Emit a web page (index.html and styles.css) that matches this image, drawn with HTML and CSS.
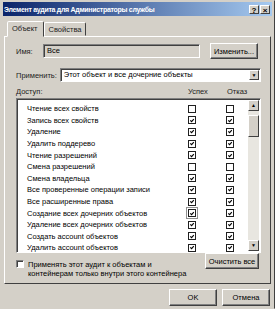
FILE: index.html
```html
<!DOCTYPE html>
<html lang="ru">
<head>
  <meta charset="UTF-8">
  <title>Элемент аудита для Администраторы службы</title>
  <link rel="stylesheet" href="styles.css">
</head>
<body>
  <div class="window">
    <div class="titlebar">
      <span class="title">Элемент аудита для Администраторы службы</span>
      <span class="tbtn">?</span>
      <span class="tbtn">×</span>
    </div>

    <div class="tabs">
      <span class="tab active">Объект</span>
      <span class="tab">Свойства</span>
    </div>

    <div class="panel">
      <div class="row name-row">
        <span class="label">Имя:</span>
        <span class="field readonly">Все</span>
        <span class="btn btn-change">Изменить...</span>
      </div>

      <div class="row apply-row">
        <span class="label">Применить:</span>
        <span class="field combo">Этот объект и все дочерние объекты<span class="drop">▼</span></span>
      </div>

      <div class="access-head">
        <span>Доступ:</span>
        <span class="col-head">Успех</span>
        <span class="col-head">Отказ</span>
      </div>

      <div class="listbox">
        <div class="rows" id="rows"></div>
        <div class="scrollbar">
          <span class="sbtn">▲</span>
          <span class="thumb"></span>
          <span class="track"></span>
          <span class="sbtn">▼</span>
        </div>
      </div>

      <div class="inherit">
        <span class="cb empty"></span>
        <span class="inherit-text">Применять этот аудит к объектам и<br>контейнерам только внутри этого контейнера</span>
        <span class="btn btn-clear">Очистить все</span>
      </div>
    </div>

    <div class="footer">
      <span class="btn btn-ok">OK</span>
      <span class="btn btn-cancel">Отмена</span>
    </div>
  </div>

  <script>
    const perms = [
      ['Чтение всех свойств', 0, 0],
      ['Запись всех свойств', 1, 1],
      ['Удаление', 1, 1],
      ['Удалить поддерево', 1, 1],
      ['Чтение разрешений', 1, 1],
      ['Смена разрешений', 0, 0],
      ['Смена владельца', 1, 1],
      ['Все проверенные операции записи', 1, 1],
      ['Все расширенные права', 1, 1],
      ['Создание всех дочерних объектов', 1, 1],
      ['Удаление всех дочерних объектов', 1, 1],
      ['Создать account объектов', 1, 1],
      ['Удалить account объектов', 1, 1]
    ];
    const check = '<svg viewBox="0 0 7 7" width="7" height="7"><path d="M1.5 3.3 L3 4.8 L5.6 1.8" fill="none" stroke="#000" stroke-width="1.3"/></svg>';
    const rows = document.getElementById('rows');
    perms.forEach((p, i) => {
      const row = document.createElement('div');
      row.className = 'perm';
      const focus = i === 9 ? ' focus' : '';
      row.innerHTML = `<span class="pname">${p[0]}</span>` +
        `<span class="pcell"><span class="cb${focus}">${p[1] ? check : ''}</span></span>` +
        `<span class="pcell"><span class="cb">${p[2] ? check : ''}</span></span>`;
      rows.appendChild(row);
    });
  </script>
</body>
</html>
```

FILE: styles.css
```css
* {
  box-sizing: border-box;
}
body {
  margin: 0;
  font-family: "Liberation Sans", Arial, sans-serif;
  font-size: 7.5px;
  color: #000;
  background: #fff;
}
.window {
  width: 275px;
  height: 309px;
  background: #d4d0c8;
  border: 1px solid #d4d0c8;
  border-right-color: #404040;
  padding: 1px 2px;
  overflow: hidden;
}
.titlebar {
  height: 14px;
  display: flex;
  align-items: center;
  gap: 1px;
  padding: 0 2px 0 1px;
  background: linear-gradient(to right, #0a246a, #a6caf0);
  color: #fff;
}
.title {
  flex: 1;
  font-weight: bold;
  font-size: 7px;
  letter-spacing: -0.3px;
  white-space: nowrap;
}
.tbtn {
  width: 10px;
  height: 9px;
  background: #d4d0c8;
  color: #000;
  font-weight: bold;
  font-size: 8px;
  line-height: 9px;
  text-align: center;
  border: 1px solid;
  border-color: #fff #404040 #404040 #fff;
}
.tabs {
  display: flex;
  align-items: flex-end;
  height: 20px;
  padding-left: 4px;
}
.tab {
  height: 14px;
  padding: 2px 4px 0;
  border: 1px solid;
  border-color: #fff #404040 transparent #fff;
  border-radius: 2px 2px 0 0;
  color: #222;
}
.tab.active {
  height: 16px;
  padding: 2px 5px 0 4px;
  margin-bottom: -1px;
  background: #d4d0c8;
  position: relative;
}
.panel {
  height: 248px;
  margin: 0 1px;
  border: 1px solid;
  border-color: #fff #404040 #404040 #fff;
  padding: 6px 9px 0 11px;
}
.row {
  display: flex;
  align-items: center;
}
.label {
  color: #222;
}
.name-row .label {
  width: 27px;
}
.field {
  height: 14px;
  line-height: 12px;
  padding-left: 3px;
  border: 1px solid;
  border-color: #808080 #fff #fff #808080;
  box-shadow: inset 1px 1px 0 #404040;
  background: #fff;
}
.readonly {
  width: 157px;
  background: #d4d0c8;
}
.btn {
  display: flex;
  align-items: center;
  justify-content: center;
  border: 1px solid;
  border-color: #fff #404040 #404040 #fff;
  box-shadow: inset -1px -1px 0 #808080;
  background: #d4d0c8;
}
.btn-change {
  width: 48px;
  height: 16px;
  margin-left: 10px;
}
.apply-row {
  margin-top: 9px;
}
.combo {
  flex: 1;
  margin-left: 3px;
  display: flex;
  align-items: center;
  justify-content: space-between;
  padding-right: 1px;
}
.drop {
  width: 10px;
  height: 10px;
  font-size: 5px;
  line-height: 8px;
  text-align: center;
  background: #d4d0c8;
  border: 1px solid;
  border-color: #fff #404040 #404040 #fff;
}
.access-head {
  display: grid;
  grid-template-columns: 1fr 39px 37px;
  margin-top: 5px;
  height: 11px;
  color: #222;
}
.col-head {
  padding-left: 3px;
}
.listbox {
  display: flex;
  height: 155px;
  background: #fff;
  border: 1px solid;
  border-color: #808080 #fff #fff #808080;
  box-shadow: inset 1px 1px 0 #404040;
  overflow: hidden;
}
.rows {
  flex: 1;
  padding-top: 4px;
}
.perm {
  display: grid;
  grid-template-columns: 1fr 40px 36px;
  height: 11.6px;
  align-items: center;
}
.pname {
  padding-left: 10px;
  white-space: nowrap;
  overflow: hidden;
}
.pcell {
  display: flex;
  justify-content: center;
}
.cb {
  width: 8px;
  height: 8px;
  border: 1px solid #202020;
  background: #fff;
  display: flex;
  align-items: center;
  justify-content: center;
}
.cb svg {
  display: block;
}
.cb.focus {
  outline: 1px solid #909090;
  outline-offset: 1px;
}
.scrollbar {
  width: 11px;
  margin: 1px 1px 1px 0;
  display: flex;
  flex-direction: column;
  background: #e8e6e0;
}
.sbtn {
  height: 11px;
  font-size: 5px;
  line-height: 9px;
  text-align: center;
  background: #d4d0c8;
  border: 1px solid;
  border-color: #fff #404040 #404040 #fff;
}
.thumb {
  height: 22px;
  margin-top: 4px;
  background: #d4d0c8;
  border: 1px solid;
  border-color: #fff #404040 #404040 #fff;
}
.track {
  flex: 1;
}
.inherit {
  display: flex;
  align-items: flex-start;
  margin-top: 0;
}
.inherit .cb {
  margin-top: 7px;
  border-color: #808080 #fff #fff #808080;
  box-shadow: inset 1px 1px 0 #404040;
}
.inherit-text {
  flex: 1;
  margin: 7px 0 0 4px;
  line-height: 9px;
  white-space: nowrap;
}
.btn-clear {
  width: 54px;
  height: 16px;
  margin-right: 2px;
}
.footer {
  display: flex;
  justify-content: flex-end;
  gap: 5px;
  margin-top: 5px;
  padding-right: 2px;
}
.btn-ok,
.btn-cancel {
  width: 48px;
  height: 17px;
}
```
